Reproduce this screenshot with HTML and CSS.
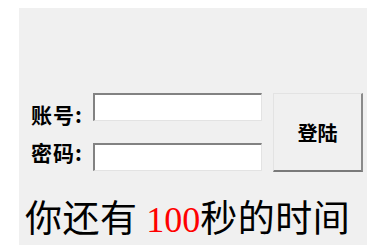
FILE: index.html
```html
<!DOCTYPE html>
<html lang="zh-CN">
<head>
<meta charset="utf-8">
<title>登陆</title>
<link rel="stylesheet" href="styles.css">
</head>
<body>
<div class="panel">
  <div class="form">
    <div class="labels">
      <label class="label">账号:</label>
      <label class="label">密码:</label>
    </div>
    <div class="inputs">
      <input class="field" type="text">
      <input class="field" type="password">
    </div>
    <button class="login" type="button">登陆</button>
  </div>
  <div class="timer">你还有 <span class="num">100</span>秒的时间</div>
</div>
</body>
</html>
```
FILE: styles.css
```css
html, body {
  margin: 0;
  padding: 0;
  background: #ffffff;
}
body {
  font-family: "Noto Sans CJK SC", "Noto Sans", sans-serif;
}
.panel {
  box-sizing: border-box;
  margin: 8px 0 0 19px;
  width: 348px;
  height: 237px;
  background: #f0f0f0;
  padding-top: 85px;
}
.form {
  display: flex;
  align-items: flex-start;
  padding-left: 12px;
}
.labels {
  width: 62px;
  display: flex;
  flex-direction: column;
  gap: 18px;
  padding-top: 11px;
}
.label {
  font-size: 21px;
  line-height: 20px;
  height: 20px;
  font-weight: bold;
  letter-spacing: 1px;
  color: #000;
  white-space: nowrap;
}
.inputs {
  width: 169px;
  display: flex;
  flex-direction: column;
  gap: 22px;
}
.field {
  box-sizing: border-box;
  width: 169px;
  height: 28px;
  margin: 0;
  padding: 0 3px;
  background: #ffffff;
  border-style: solid;
  border-width: 2px 1px 1px 2px;
  border-color: #828282 #e3e3e3 #e3e3e3 #828282;
  outline: none;
}
.login {
  box-sizing: border-box;
  margin: 0 0 0 11px;
  width: 90px;
  height: 79px;
  padding: 0;
  background: #f0f0f0;
  border-style: solid;
  border-width: 1px 2px 2px 1px;
  border-color: #e3e3e3 #8a8a8a #7a7a7a #e3e3e3;
  font-family: "Noto Sans CJK SC", "Noto Sans", sans-serif;
  font-size: 20px;
  font-weight: bold;
  color: #000;
}
.timer {
  margin-top: 26px;
  padding-left: 6px;
  font-size: 37px;
  line-height: 36px;
  height: 36px;
  letter-spacing: 0.5px;
  color: #000;
  white-space: nowrap;
}
.num {
  font-family: "Liberation Serif", serif;
  font-size: 36px;
  letter-spacing: 0;
  color: #ff0000;
  line-height: 36px;
}
```
